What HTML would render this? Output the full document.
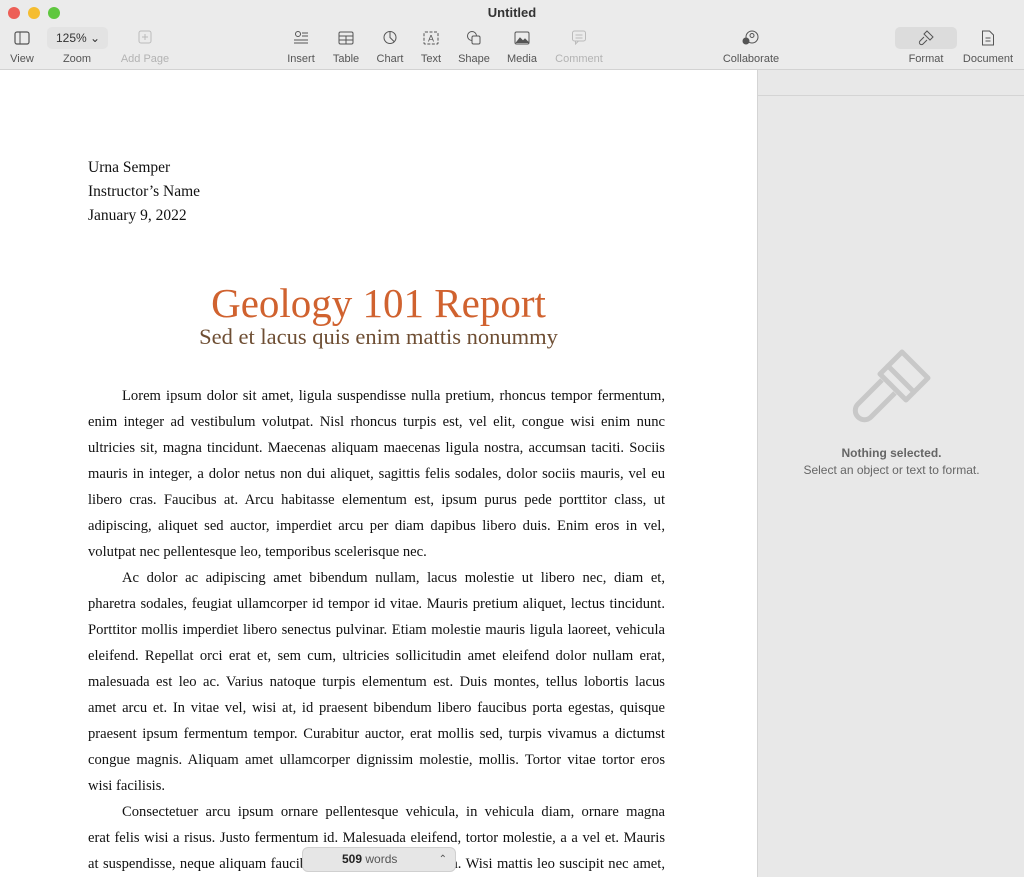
<!DOCTYPE html>
<html><head><meta charset="utf-8"><style>
*{margin:0;padding:0;box-sizing:border-box}
body{width:1024px;height:877px;overflow:hidden;position:relative;background:#fff;font-family:"Liberation Sans",sans-serif}
.tb{position:absolute;left:0;top:0;width:1024px;height:70px;background:#ebebeb;border-bottom:1px solid #d2d2d2}
.dot{position:absolute;top:7px;width:12px;height:12px;border-radius:50%}
.lbl{position:absolute;top:53px;font-size:11px;color:#555;transform:translateX(-50%);white-space:nowrap}
.dim{color:#b3b3b3}
.ic{position:absolute;top:30px;transform:translateX(-50%)}
.side{position:absolute;left:757px;top:70px;width:267px;height:807px;background:#e8e8e8;border-left:1px solid #d4d4d4}
.doc{position:absolute;font-family:"Liberation Serif",serif;color:#111;font-size:14.6px;white-space:nowrap}
.l{position:absolute;left:88px;width:577px;height:26px;line-height:26px;text-align:justify;text-align-last:justify;overflow:visible}
.l.e{text-align-last:left}
.l.i{left:122px;width:543px}
</style></head><body>
<div class="tb">
<div class="dot" style="left:8px;background:#ed5f57"></div>
<div class="dot" style="left:28px;background:#f5bd30"></div>
<div class="dot" style="left:48px;background:#5fc73f"></div>
<div style="position:absolute;top:5px;left:0;width:1024px;text-align:center;font-size:13px;font-weight:bold;color:#333">Untitled</div>
<svg class="ic" style="left:22px;top:31px" width="16" height="14" viewBox="0 0 16 14"><rect x="1" y="1" width="14" height="12" rx="2" fill="none" stroke="#555" stroke-width="1.2"/><line x1="6" y1="1" x2="6" y2="13" stroke="#555"/></svg>
<div style="position:absolute;left:47px;top:27px;width:61px;height:22px;border-radius:5px;background:#e3e3e3;font-size:12px;color:#333;line-height:22px;padding-left:9px">125% ⌄</div>
<svg class="ic" style="left:145px" width="14" height="14" viewBox="0 0 14 14"><rect x="1" y="1" width="12" height="12" rx="2" fill="none" stroke="#bbb"/><path d="M7 4v6M4 7h6" stroke="#bbb"/></svg>
<svg class="ic" style="left:301px" width="16" height="16" viewBox="0 0 16 16" stroke="#555" fill="none"><circle cx="5" cy="4" r="2.5"/><path d="M9 3h6M9 6h6M1 10h14M1 13h14"/></svg>
<svg class="ic" style="left:346px;top:31px" width="16" height="14" viewBox="0 0 16 14" stroke="#555" fill="none"><rect x="1" y="1" width="14" height="12" rx="1.5"/><path d="M1 5h14M1 9h14M8 5v8"/></svg>
<svg class="ic" style="left:390px" width="15" height="15" viewBox="0 0 15 15" stroke="#555" fill="none"><circle cx="7.5" cy="7.5" r="6"/><path d="M7.5 1.5v6l4 4"/></svg>
<svg class="ic" style="left:431px;top:31px" width="16" height="14" viewBox="0 0 16 14" stroke="#555" fill="none"><rect x="1" y="1" width="14" height="12" rx="1" stroke-dasharray="3 1.5"/><text x="8" y="10.5" font-size="9" text-anchor="middle" fill="#555" stroke="none" font-family="Liberation Sans">A</text></svg>
<svg class="ic" style="left:474px" width="16" height="16" viewBox="0 0 16 16" stroke="#555" fill="none"><circle cx="6" cy="6" r="4.5"/><rect x="6" y="6" width="8" height="8" rx="1.5" fill="#ebebeb"/></svg>
<svg class="ic" style="left:522px;top:31px" width="16" height="14" viewBox="0 0 16 14" stroke="#555" fill="none"><rect x="1" y="1" width="14" height="12" rx="1.5"/><path d="M2 12l4-5 3 3 2-2 4 4" fill="#555"/></svg>
<svg class="ic" style="left:579px" width="15" height="15" viewBox="0 0 15 15" stroke="#bbb" fill="none"><rect x="1" y="1" width="13" height="10" rx="2"/><path d="M4 11v3l3-3M4 5h7M4 8h7"/></svg>
<svg class="ic" style="left:751px" width="18" height="16" viewBox="0 0 18 16" stroke="#555" fill="none"><circle cx="10" cy="7" r="6"/><circle cx="10" cy="5.5" r="2"/><circle cx="4" cy="11" r="3" fill="#555"/></svg>
<div style="position:absolute;left:895px;top:27px;width:62px;height:22px;border-radius:5px;background:#dcdcdc"></div>
<svg class="ic" style="left:926px" width="16" height="16" viewBox="0 0 16 16" stroke="#555" fill="none"><path d="M9 1l6 6-3 3-6-6z M6 7l-4 4a1.5 1.5 0 0 0 3 3l4-4"/></svg>
<svg class="ic" style="left:988px" width="13" height="16" viewBox="0 0 13 16" stroke="#555" fill="none"><path d="M1 1h7l4 4v10H1z M4 8h5M4 11h5"/></svg>
<div class="lbl" style="left:22px">View</div>
<div class="lbl" style="left:77px">Zoom</div>
<div class="lbl dim" style="left:145px">Add Page</div>
<div class="lbl" style="left:301px">Insert</div>
<div class="lbl" style="left:346px">Table</div>
<div class="lbl" style="left:390px">Chart</div>
<div class="lbl" style="left:431px">Text</div>
<div class="lbl" style="left:474px">Shape</div>
<div class="lbl" style="left:522px">Media</div>
<div class="lbl dim" style="left:579px">Comment</div>
<div class="lbl" style="left:751px">Collaborate</div>
<div class="lbl" style="left:926px">Format</div>
<div class="lbl" style="left:988px">Document</div>
</div>
<div class="side">
<div style="position:absolute;top:25px;left:0;width:267px;border-top:1px solid #d4d4d4"></div>
<svg style="position:absolute;left:94px;top:278px" width="80" height="86" viewBox="0 0 80 86" fill="none" stroke="#c8c8c8" stroke-width="5" stroke-linejoin="round"><path d="M50 4l26 26-14 14-26-26z"/><path d="M36 18l-8 8 26 26 8-8"/><path d="M30 32l-24 24a9 9 0 0 0 13 13l24-24"/></svg>
<div style="position:absolute;top:376px;width:267px;text-align:center;font-size:12px;font-weight:bold;color:#666">Nothing selected.</div>
<div style="position:absolute;top:393px;width:267px;text-align:center;font-size:12px;color:#666">Select an object or text to format.</div>
</div>
<div class="doc" style="left:88px;top:156px;line-height:24px;font-size:15.5px">Urna Semper<br>Instructor’s Name<br>January 9, 2022</div>
<div class="doc" style="left:0;width:757px;top:279px;text-align:center;font-size:41px;color:#d0622f">Geology 101 Report</div>
<div class="doc" style="left:0;width:757px;top:324px;text-align:center;font-size:22.5px;color:#6e4e33">Sed et lacus quis enim mattis nonummy</div>
<div class="doc" style="left:0;top:2px">
<div class="l i" style="top:381px">Lorem ipsum dolor sit amet, ligula suspendisse nulla pretium, rhoncus tempor fermentum,</div>
<div class="l" style="top:407px">enim integer ad vestibulum volutpat. Nisl rhoncus turpis est, vel elit, congue wisi enim nunc</div>
<div class="l" style="top:433px">ultricies sit, magna tincidunt. Maecenas aliquam maecenas ligula nostra, accumsan taciti. Sociis</div>
<div class="l" style="top:459px">mauris in integer, a dolor netus non dui aliquet, sagittis felis sodales, dolor sociis mauris, vel eu</div>
<div class="l" style="top:485px">libero cras. Faucibus at. Arcu habitasse elementum est, ipsum purus pede porttitor class, ut</div>
<div class="l" style="top:511px">adipiscing, aliquet sed auctor, imperdiet arcu per diam dapibus libero duis. Enim eros in vel,</div>
<div class="l e" style="top:537px">volutpat nec pellentesque leo, temporibus scelerisque nec.</div>
<div class="l i" style="top:563px">Ac dolor ac adipiscing amet bibendum nullam, lacus molestie ut libero nec, diam et,</div>
<div class="l" style="top:589px">pharetra sodales, feugiat ullamcorper id tempor id vitae. Mauris pretium aliquet, lectus tincidunt.</div>
<div class="l" style="top:615px">Porttitor mollis imperdiet libero senectus pulvinar. Etiam molestie mauris ligula laoreet, vehicula</div>
<div class="l" style="top:641px">eleifend. Repellat orci erat et, sem cum, ultricies sollicitudin amet eleifend dolor nullam erat,</div>
<div class="l" style="top:667px">malesuada est leo ac. Varius natoque turpis elementum est. Duis montes, tellus lobortis lacus</div>
<div class="l" style="top:693px">amet arcu et. In vitae vel, wisi at, id praesent bibendum libero faucibus porta egestas, quisque</div>
<div class="l" style="top:719px">praesent ipsum fermentum tempor. Curabitur auctor, erat mollis sed, turpis vivamus a dictumst</div>
<div class="l" style="top:745px">congue magnis. Aliquam amet ullamcorper dignissim molestie, mollis. Tortor vitae tortor eros</div>
<div class="l e" style="top:771px">wisi facilisis.</div>
<div class="l i" style="top:797px">Consectetuer arcu ipsum ornare pellentesque vehicula, in vehicula diam, ornare magna</div>
<div class="l" style="top:823px">erat felis wisi a risus. Justo fermentum id. Malesuada eleifend, tortor molestie, a a vel et. Mauris</div>
<div class="l" style="top:849px">at suspendisse, neque aliquam faucibus adipiscing, vivamus in. Wisi mattis leo suscipit nec amet,</div>
</div>
<div style="position:absolute;left:302px;top:847px;width:154px;height:25px;border-radius:6px;background:#e6e6e6;border:1px solid #d0d0d0;font-size:12px;color:#555;line-height:23px;padding-left:39px"><b style="color:#222">509</b> words<span style="position:absolute;right:8px;top:0;font-size:10px">⌃</span></div>
</body></html>
